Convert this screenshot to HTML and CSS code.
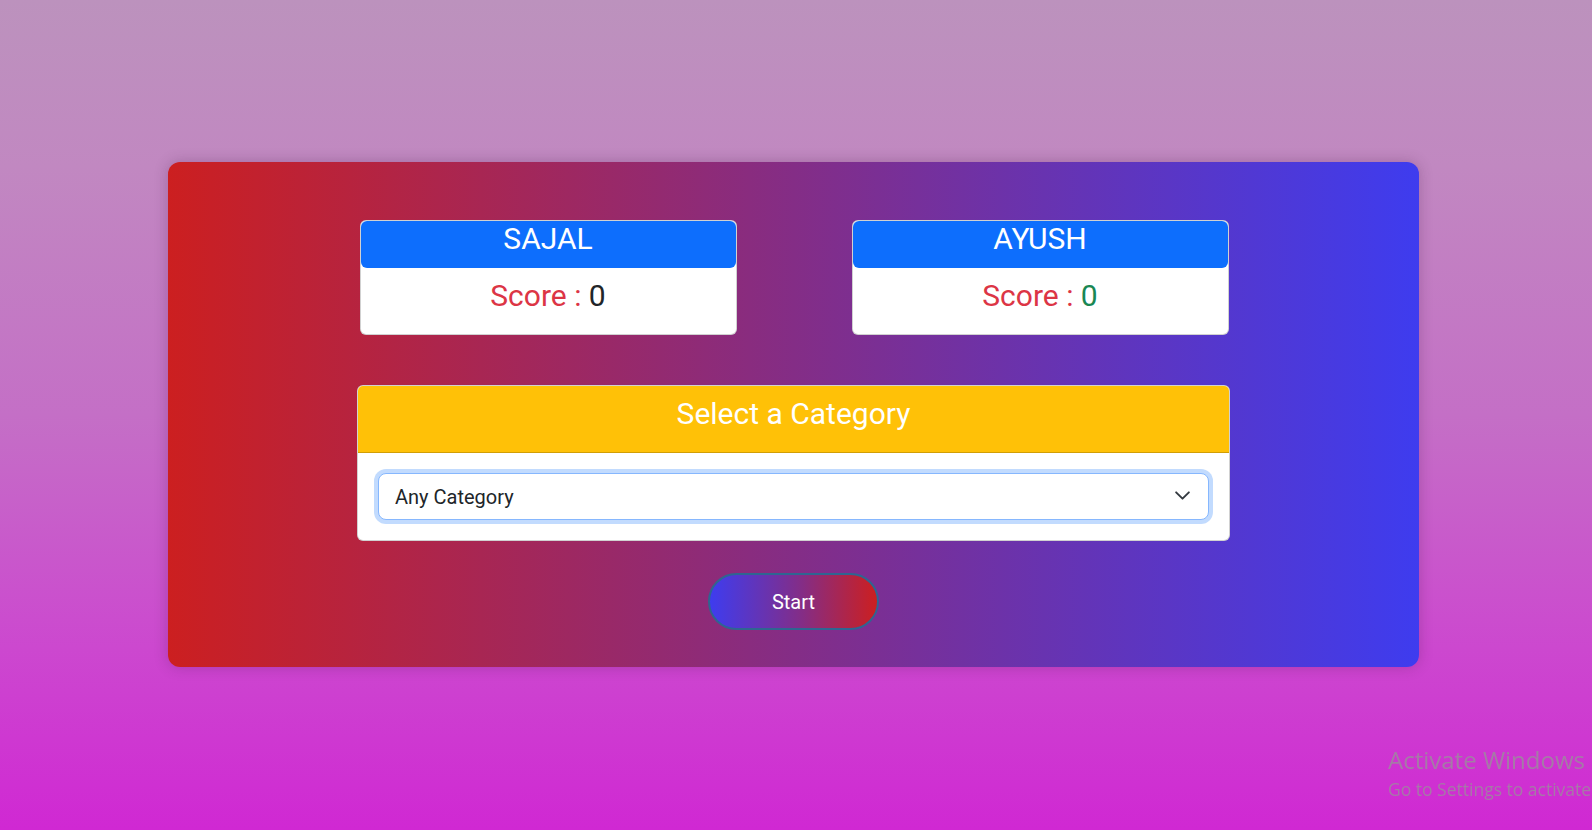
FILE: index.html
```html
<!DOCTYPE html>
<html lang="en">
<head>
<meta charset="utf-8">
<title>Quiz Game</title>
<link rel="stylesheet" href="styles.css">
</head>
<body>
<main class="stage">
  <section class="game">
    <div class="players">
      <div class="player">
        <div class="player-name">SAJAL</div>
        <div class="player-score"><span class="label">Score : </span><span class="value dark">0</span></div>
      </div>
      <div class="player">
        <div class="player-name">AYUSH</div>
        <div class="player-score"><span class="label">Score : </span><span class="value green">0</span></div>
      </div>
    </div>
    <div class="category">
      <div class="category-head">Select a Category</div>
      <div class="category-body">
        <div class="select-wrap">
          <select class="select">
            <option>Any Category</option>
          </select>
          <svg class="chevron" width="17" height="17" viewBox="0 0 16 16" aria-hidden="true">
            <path d="m2 5 6 6 6-6" fill="none" stroke="#343a40" stroke-width="1.8" stroke-linecap="round" stroke-linejoin="round"/>
          </svg>
        </div>
      </div>
    </div>
    <button class="start">Start</button>
  </section>
</main>
<div class="activate">
  <div class="activate-title">Activate Windows</div>
  <div class="activate-sub">Go to Settings to activate</div>
</div>
</body>
</html>
```
FILE: styles.css
```css
html, body {
  margin: 0;
  padding: 0;
}
body {
  width: 1592px;
  height: 830px;
  overflow: hidden;
  background: linear-gradient(180deg, #bc92bd 0%, #c188c1 20%, #c46fc6 50%, #cc48cf 78%, #d028d3 100%);
  font-family: Roboto, "Liberation Sans", Arial, sans-serif;
  color: #212529;
}
.stage {
  padding-top: 162px;
}
.game {
  width: 1251px;
  height: 505px;
  box-sizing: border-box;
  margin-left: calc(50% - 628px);
  border-radius: 12px;
  background: linear-gradient(90deg, #cc1f20 0%, #842d86 50%, #3e3cef 100%);
  box-shadow: 0 0 14px rgba(60, 20, 60, 0.25);
  padding-top: 58px;
  display: flex;
  flex-direction: column;
  align-items: center;
}
.players {
  display: flex;
  gap: 115px;
  margin-left: 1px;
}
.player {
  width: 377px;
  height: 115px;
  box-sizing: border-box;
  background: #fff;
  border: 1px solid rgba(0, 0, 0, 0.18);
  border-radius: 6px;
  display: flex;
  flex-direction: column;
}
.player-name {
  height: 47px;
  box-sizing: border-box;
  background: #0d6efd;
  color: #fff;
  border-radius: 6px;
  text-align: center;
  font-size: 30px;
  line-height: 35px;
  padding-top: 0;
}
.player-score {
  flex: 1;
  text-align: center;
  font-size: 30px;
  line-height: 36px;
  padding-top: 10px;
}
.label {
  color: #dc3545;
}
.dark {
  color: #212529;
}
.green {
  color: #198754;
}
.category {
  margin-top: 50px;
  width: 873px;
  box-sizing: border-box;
  background: #fff;
  border: 1px solid rgba(0, 0, 0, 0.18);
  border-radius: 6px;
  overflow: hidden;
}
.category-head {
  height: 67px;
  box-sizing: border-box;
  background: #ffc107;
  border-bottom: 1px solid rgba(0, 0, 0, 0.18);
  color: #fff;
  text-align: center;
  font-size: 30px;
  line-height: 36px;
  padding-top: 10px;
}
.category-body {
  padding: 20px;
}
.select-wrap {
  position: relative;
}
.select {
  display: block;
  width: 100%;
  height: 47px;
  box-sizing: border-box;
  appearance: none;
  -webkit-appearance: none;
  background: #fff;
  border: 1px solid #86b7fe;
  border-radius: 8px;
  box-shadow: 0 0 0 4px rgba(13, 110, 253, 0.25);
  outline: none;
  font-family: Roboto, "Liberation Sans", Arial, sans-serif;
  font-size: 20px;
  color: #212529;
  padding: 0 48px 0 16px;
}
.chevron {
  position: absolute;
  right: 18px;
  top: 14px;
}
.start {
  margin-top: 32px;
  width: 171px;
  height: 57px;
  box-sizing: border-box;
  border: 2px solid #2f6591;
  border-radius: 30px;
  background: linear-gradient(90deg, #3e3cef 0%, #842d86 55%, #cc1f20 100%);
  color: #fff;
  font-family: Roboto, "Liberation Sans", Arial, sans-serif;
  font-size: 20px;
  cursor: pointer;
}
.activate {
  position: fixed;
  left: 1388px;
  top: 744px;
  white-space: nowrap;
  color: rgba(150, 150, 150, 0.72);
  font-family: "Open Sans", "Noto Sans", sans-serif;
}
.activate-title {
  font-size: 24px;
  line-height: 31px;
}
.activate-sub {
  font-size: 17.5px;
  line-height: 24px;
  margin-top: 2px;
}
```
